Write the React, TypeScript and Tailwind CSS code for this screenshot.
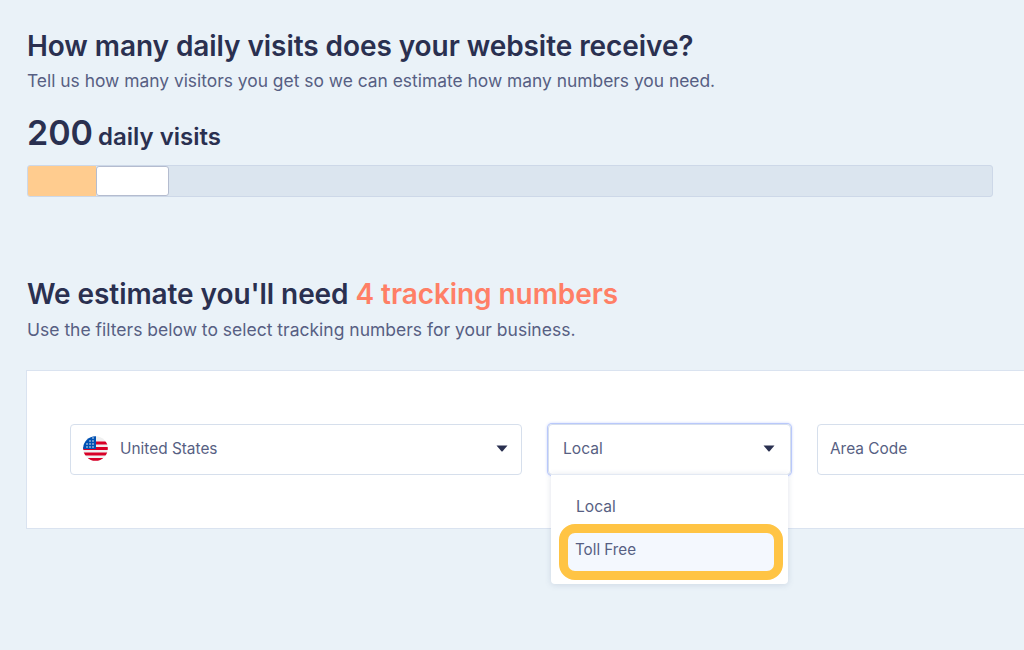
import React from "react";

function Caret() {
  return (
    <svg width="12" height="7" viewBox="0 0 12 7" className="shrink-0">
      <path d="M0.5 0.5H11.5L6.6 6.2Q6 6.8 5.4 6.2Z" fill="#2a3050" />
    </svg>
  );
}

function Flag() {
  return (
    <svg width="25" height="25" viewBox="0 0 25 25" className="shrink-0">
      <defs>
        <clipPath id="flagclip">
          <circle cx="12.5" cy="12.5" r="12.3" />
        </clipPath>
      </defs>
      <g clipPath="url(#flagclip)">
        <rect width="25" height="25" fill="#f0f0f0" />
        <rect y="5.5" x="12" width="13" height="3" fill="#d80027" />
        <rect y="11" width="25" height="3" fill="#d80027" />
        <rect y="16.5" width="25" height="3" fill="#d80027" />
        <rect y="22" width="25" height="3" fill="#d80027" />
        <rect width="13" height="13" fill="#0052b4" />
        <g fill="#f0f0f0">
          <circle cx="4" cy="8" r="0.8" />
          <circle cx="4" cy="11" r="0.8" />
          <circle cx="7" cy="5" r="0.8" />
          <circle cx="7" cy="8" r="0.8" />
          <circle cx="7" cy="11" r="0.8" />
          <circle cx="10" cy="2" r="0.8" />
          <circle cx="10" cy="5" r="0.8" />
          <circle cx="10" cy="8" r="0.8" />
          <circle cx="10" cy="11" r="0.8" />
        </g>
      </g>
    </svg>
  );
}

export default function App() {
  return (
    <div className="w-[1024px] h-[650px] overflow-hidden bg-[#eaf2f8] font-['Inter','Liberation_Sans',sans-serif] pt-[28px]">
      <div className="pl-[27px] w-[993px]">
        <h1 className="text-[28px] leading-[36px] font-semibold text-[#2a3050] tracking-[-0.07px]">
          How many daily visits does your website receive?
        </h1>
        <p className="text-[17.4px] leading-[24px] mt-[5px] text-[#575f83]">
          Tell us how many visitors you get so we can estimate how many numbers you need.
        </p>
        <div className="flex items-baseline mt-[18px] text-[#2a3050] font-semibold">
          <span className="text-[34px] leading-[44px]">200</span>
          <span className="text-[24px] leading-[30px] ml-[5px]">daily visits</span>
        </div>
        <div className="flex mt-[10px] h-[32px] rounded-[3px] border border-[#cdd8e8] bg-[#dbe5ef] overflow-hidden">
          <div className="w-[68px] bg-[#ffcc8f]" />
          <div className="w-[73px] bg-white border border-[#b4bccf] rounded-[3px]" />
        </div>
      </div>

      <div className="pl-[27px] mt-[79px]">
        <h2 className="text-[28px] leading-[36px] font-semibold text-[#2a3050] tracking-[-0.07px]">
          We estimate you'll need <span className="text-[#ff7f66]">4 tracking numbers</span>
        </h2>
        <p className="text-[17.5px] leading-[24px] mt-[6px] text-[#575f83]">
          Use the filters below to select tracking numbers for your business.
        </p>
      </div>

      <div className="ml-[26px] mt-[28px] w-[1010px] h-[159px] bg-white border border-[#dae3f0] pt-[53px] pl-[43px] flex items-start">
        <div className="w-[452px] shrink-0 h-[51px] flex items-center rounded-[4px] border border-[#d6dfec] pl-[12px] pr-[13px] pb-[2px]">
          <Flag />
          <span className="ml-[12px] text-[15.4px] text-[#575f83] flex-1">United States</span>
          <Caret />
        </div>
        <div className="relative ml-[26px] w-[243px] shrink-0">
          <div className="h-[51px] flex items-center rounded-[4px] border border-[#d6dfec] shadow-[0_0_0_1px_#b9c8fb,0_0_3px_1px_#cdd8fd] pl-[14px] pr-[15px] pb-[2px]">
            <span className="text-[15.6px] text-[#575f83] flex-1">Local</span>
            <Caret />
          </div>
          <div className="absolute left-[3px] top-[50px] w-[237px] h-[110px] bg-white rounded-b-[4px] border-t border-[#e3e9f3] shadow-[0_1px_6px_rgba(80,100,140,0.18)] pl-[8px] pt-[20px]">
            <div className="pl-[17px] text-[15.6px] leading-[24px] text-[#575f83]">Local</div>
            <div className="mt-[5px] h-[56px] w-[224px] rounded-[16px] border-[9px] border-[#ffc444] bg-[#f4f8fe] pl-[7px] pt-[5px] text-[15.2px] leading-[24px] text-[#575f83]">
              Toll Free
            </div>
          </div>
        </div>
        <div className="ml-[26px] w-[260px] shrink-0 h-[51px] flex items-center rounded-[4px] border border-[#d6dfec] pl-[12px] pb-[2px]">
          <span className="text-[15.4px] text-[#575f83]">Area Code</span>
        </div>
      </div>
    </div>
  );
}
